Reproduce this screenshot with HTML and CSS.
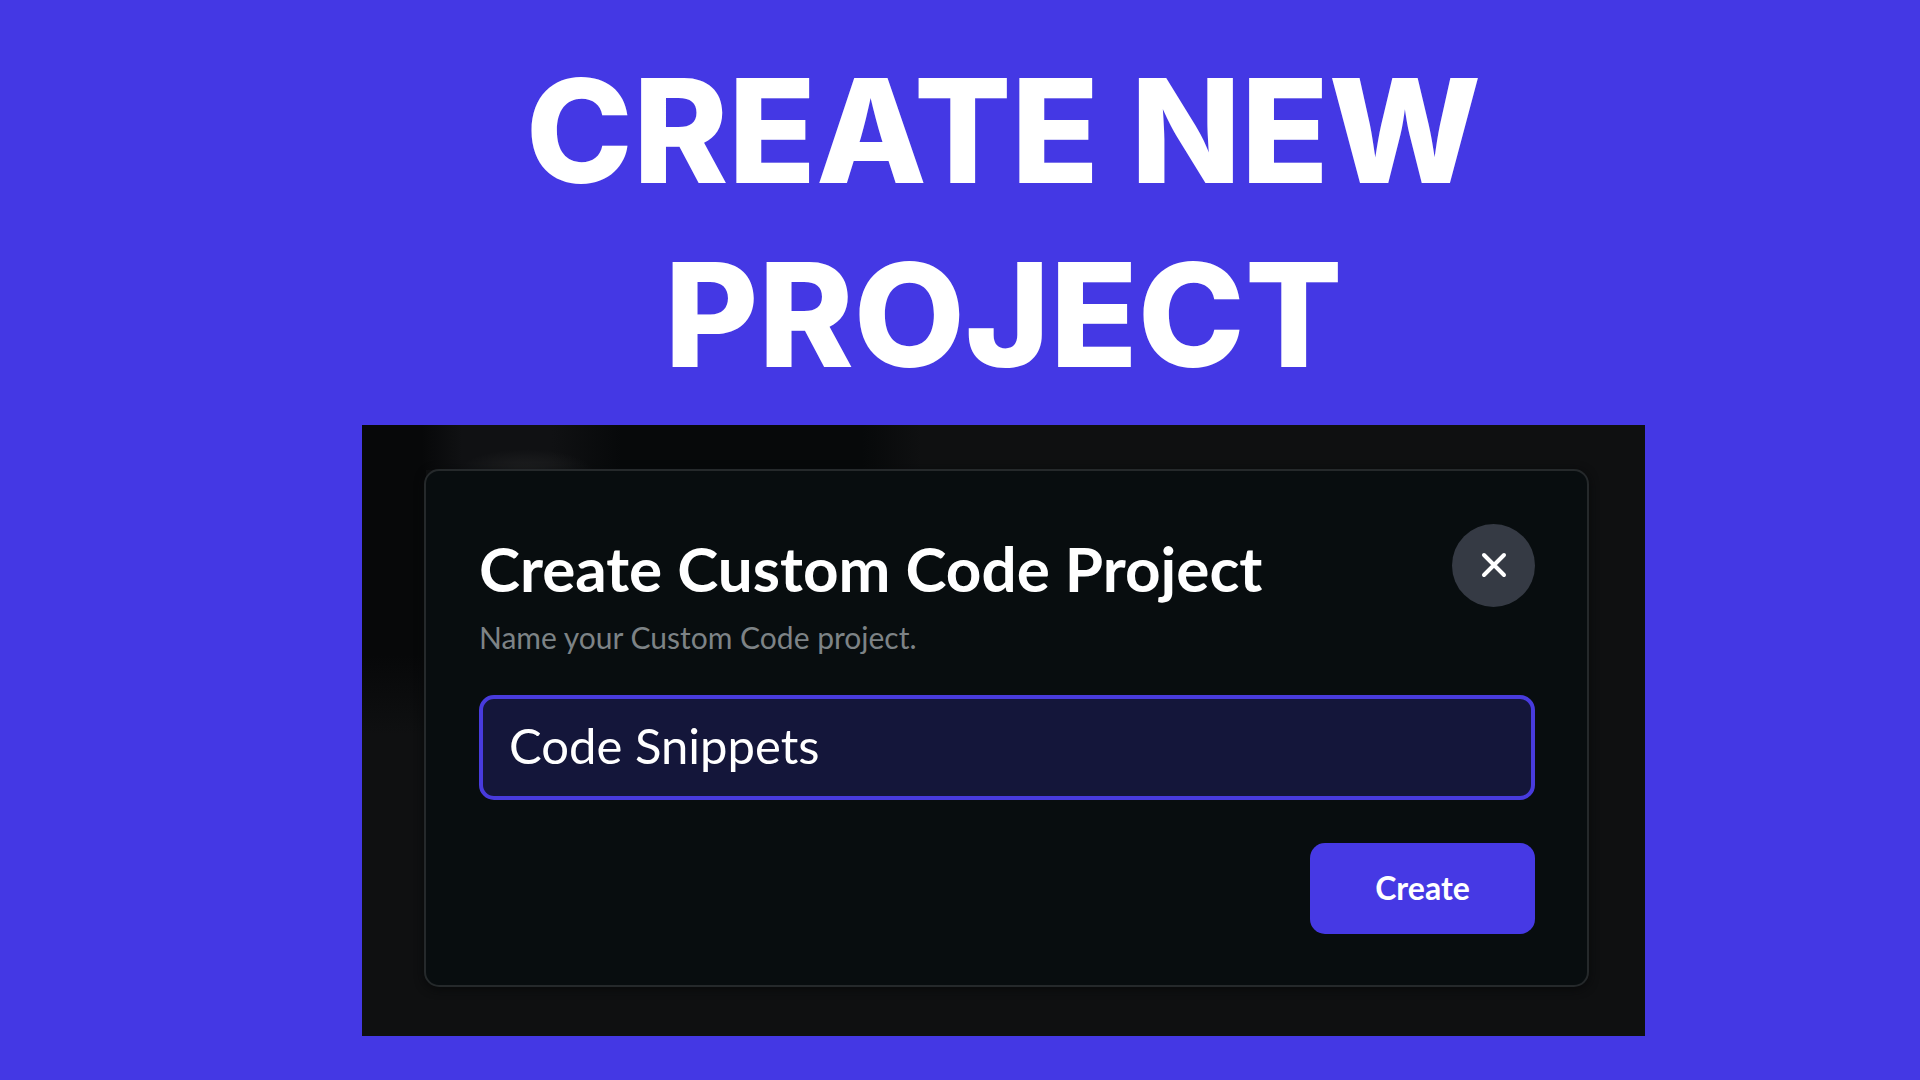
FILE: index.html
```html
<!DOCTYPE html>
<html lang="en">
<head>
<meta charset="utf-8">
<meta name="viewport" content="width=device-width, initial-scale=1">
<title>Create New Project</title>
<link rel="stylesheet" href="styles.css">
</head>
<body>
<main class="slide">
  <h1 class="headline">CREATE NEW<br>PROJECT</h1>
  <section class="backdrop">
    <form class="dialog" role="dialog" aria-labelledby="dialog-title">
      <header class="dialog-header">
        <div class="dialog-text">
          <h2 class="dialog-title" id="dialog-title">Create Custom Code Project</h2>
          <label class="dialog-label" for="project-name">Name your Custom Code project.</label>
        </div>
        <button class="close-button" type="button" aria-label="Close">
          <svg class="close-icon" viewBox="0 0 24 24" aria-hidden="true"><path d="M2 1 22 21M22 1 2 21"/></svg>
        </button>
      </header>
      <input class="name-input" id="project-name" type="text" value="Code Snippets" autocomplete="off" spellcheck="false">
      <footer class="dialog-footer">
        <button class="create-button" type="button">Create</button>
      </footer>
    </form>
  </section>
</main>
</body>
</html>
```
FILE: styles.css
```css
* {
  box-sizing: border-box;
}

body {
  margin: 0;
  min-height: 100vh;
  background: #4438e4;
  color: #fff;
  font-family: Lato, "Liberation Sans", sans-serif;
}

.slide {
  padding: 39px 275px 44px 362px;
}

.headline {
  margin: 0 0 18px;
  font-family: Inter, "Liberation Sans", sans-serif;
  font-size: 144px;
  font-weight: 800;
  line-height: 184px;
  text-align: center;
}

.backdrop {
  padding: 44px 56px 49px 62px;
  background:
    radial-gradient(ellipse 70px 26px at 84px 50px, #232425, transparent) 80px 0 / 170px 45px no-repeat,
    linear-gradient(90deg, #070809 0, #070809 60px, #101113 100px, #101113 190px, #07090a 260px, #07090a 500px, transparent 560px) 0 0 / 100% 45px no-repeat,
    linear-gradient(#070809 0, #070809 230px, transparent 310px) 0 0 / 64px 100% no-repeat,
    #0f1011;
}

.dialog {
  padding: 53px 52px 51px 53px;
  border: 2px solid #25292b;
  border-radius: 15px;
  background: #080d0f;
  box-shadow: 0 2px 10px #08090a;
}

.dialog-header {
  display: flex;
  justify-content: space-between;
  align-items: flex-start;
  gap: 24px;
}

.dialog-text {
  padding-top: 6px;
}

.dialog-title {
  margin: 0;
  font-size: 62px;
  font-weight: 700;
  line-height: 76px;
}

.dialog-label {
  display: block;
  margin-bottom: 26px;
  color: #7d8386;
  font-size: 30px;
  line-height: 63px;
}

.close-button {
  display: flex;
  flex: none;
  align-items: center;
  justify-content: center;
  width: 83px;
  height: 83px;
  padding: 0;
  border: 0;
  border-radius: 50%;
  background: #353a44;
}

.close-icon {
  width: 24px;
  height: 24px;
  overflow: visible;
  fill: none;
  stroke: #fff;
  stroke-width: 4;
  stroke-linecap: round;
}

.name-input {
  display: block;
  width: 100%;
  height: 105px;
  padding: 0 26px 6px;
  border: 4px solid #483bdd;
  border-radius: 15px;
  outline: 0;
  background: #14163a;
  color: #fff;
  font: 400 49px Lato, "Liberation Sans", sans-serif;
}

.dialog-footer {
  display: flex;
  justify-content: flex-end;
  margin-top: 43px;
}

.create-button {
  width: 225px;
  height: 91px;
  padding: 0 0 3px;
  border: 0;
  border-radius: 15px;
  background: #4639e4;
  color: #fff;
  font: 700 32px Lato, "Liberation Sans", sans-serif;
}

@media (max-width: 1400px) {
  .slide {
    padding-right: 40px;
    padding-left: 40px;
  }
}
```
